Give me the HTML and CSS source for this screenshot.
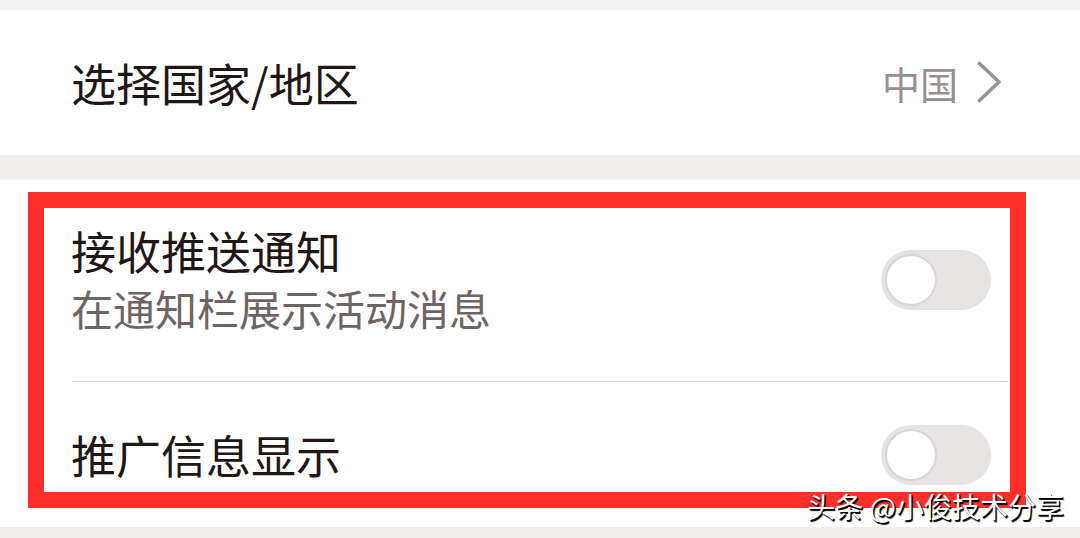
FILE: index.html
```html
<!DOCTYPE html>
<html lang="zh-CN">
<head>
<meta charset="utf-8">
<title>设置</title>
<link rel="stylesheet" href="styles.css">
</head>
<body>
<div class="screen">
  <div class="band band-top"></div>
  <section class="card">
    <div class="row row-single">
      <span class="title">选择国家/地区</span>
      <span class="value">
        <span class="value-text">中国</span>
        <svg class="chevron" width="26" height="42" viewBox="0 0 26 42" aria-hidden="true">
          <polyline points="3.5,2.5 23,21 3.5,39.5" fill="none" stroke="#9b9393" stroke-width="3.6" stroke-linecap="round" stroke-linejoin="round"/>
        </svg>
      </span>
    </div>
  </section>
  <div class="band band-gap"></div>
  <section class="card card-toggles">
    <div class="row row-double">
      <div class="texts">
        <span class="title">接收推送通知</span>
        <span class="subtitle">在通知栏展示活动消息</span>
      </div>
      <span class="toggle"><span class="knob"></span></span>
    </div>
    <div class="divider"></div>
    <div class="row row-single">
      <span class="title">推广信息显示</span>
      <span class="toggle"><span class="knob"></span></span>
    </div>
    <div class="highlight"></div>
  </section>
  <div class="band band-bottom"></div>
  <div class="watermark">头条 @小俊技术分享</div>
</div>
</body>
</html>
```

FILE: styles.css
```css
html, body {
  margin: 0;
  padding: 0;
}
body {
  background: #f0efee;
  font-family: "Noto Sans CJK SC", "Noto Sans", sans-serif;
}
.screen {
  position: relative;
  width: 1080px;
  height: 538px;
  overflow: hidden;
  display: flex;
  flex-direction: column;
}
.band-top {
  height: 10px;
  background: #f5f4f4;
}
.band-gap {
  height: 24px;
  background: #f0efee;
}
.band-bottom {
  flex: 1;
  background: #f0efee;
}
.card {
  background: #ffffff;
  position: relative;
}
.row {
  display: flex;
  align-items: center;
  justify-content: space-between;
  padding-left: 71px;
  padding-right: 89px;
  box-sizing: border-box;
}
.row-single {
  height: 145px;
}
.row-double {
  height: 202px;
}
.title {
  font-size: 45px;
  line-height: 57px;
  color: #211616;
}
.subtitle {
  font-size: 42px;
  line-height: 57px;
  color: #6e6464;
}
.texts {
  display: flex;
  flex-direction: column;
  margin-top: -3px;
}
.value {
  display: flex;
  align-items: center;
  gap: 18px;
  margin-right: -11px;
}
.value-text {
  font-size: 38px;
  line-height: 44px;
  color: #979090;
}
.chevron {
  display: block;
  margin-top: -2px;
}
.divider {
  height: 1px;
  margin: 0 72px;
  background: #d4d0d0;
}
.toggle {
  position: relative;
  width: 110px;
  height: 60px;
  border-radius: 30px;
  background: #e6e3e2;
  flex: none;
}
.knob {
  position: absolute;
  left: 4px;
  top: 4px;
  width: 52px;
  height: 52px;
  box-sizing: border-box;
  border-radius: 50%;
  background: #ffffff;
  border: 2px solid #d8d4d3;
}
.highlight {
  position: absolute;
  left: 28px;
  top: 13px;
  width: 998px;
  height: 316px;
  box-sizing: border-box;
  border: 16px solid #fe2f2b;
  pointer-events: none;
}
.watermark {
  position: absolute;
  right: 16px;
  top: 492px;
  font-size: 28px;
  line-height: 28px;
  color: #ffffff;
  text-shadow: 1.5px 1.5px 1px #000000, 1px 1px 0 #000000;
  white-space: nowrap;
}
```
